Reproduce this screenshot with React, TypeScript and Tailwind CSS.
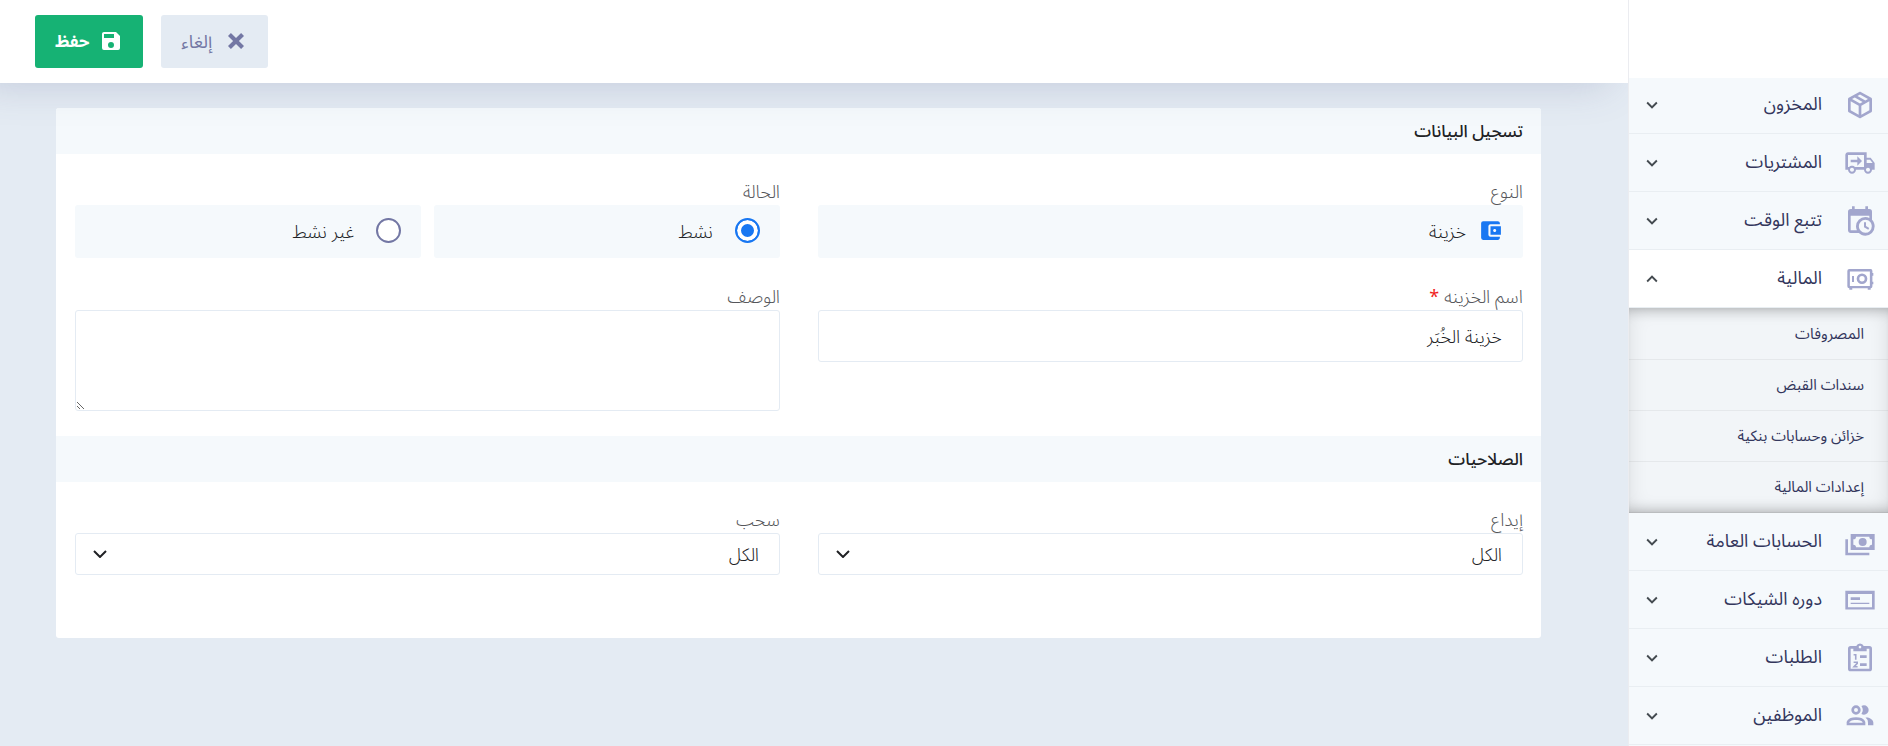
import { ReactNode, useState } from "react";
import { MdAccountBalanceWallet } from "react-icons/md";

function Icon({ className, children }: { className?: string; children: ReactNode }) {
  return (
    <svg viewBox="0 0 24 24" fill="currentColor" aria-hidden="true" className={className}>
      {children}
    </svg>
  );
}

const icons = {
  stock: (
    <path d="M21,16.5C21,16.88 20.79,17.21 20.47,17.38L12.57,21.82C12.41,21.94 12.21,22 12,22C11.79,22 11.59,21.94 11.43,21.82L3.53,17.38C3.21,17.21 3,16.88 3,16.5V7.5C3,7.12 3.21,6.79 3.53,6.62L11.43,2.18C11.59,2.06 11.79,2 12,2C12.21,2 12.41,2.06 12.57,2.18L20.47,6.62C20.79,6.79 21,7.12 21,7.5V16.5M12,4.15L10.11,5.22L16,8.61L17.96,7.5L12,4.15M6.04,7.5L12,10.85L13.96,9.75L8.08,6.35L6.04,7.5M5,15.91L11,19.29V12.58L5,9.21V15.91M19,15.91V9.21L13,12.58V19.29L19,15.91Z" />
  ),
  truck: (
    <path d="M18 18.5C18.83 18.5 19.5 17.83 19.5 17C19.5 16.17 18.83 15.5 18 15.5C17.17 15.5 16.5 16.17 16.5 17C16.5 17.83 17.17 18.5 18 18.5M19.5 9.5H17V12H21.46L19.5 9.5M6 18.5C6.83 18.5 7.5 17.83 7.5 17C7.5 16.17 6.83 15.5 6 15.5C5.17 15.5 4.5 16.17 4.5 17C4.5 17.83 5.17 18.5 6 18.5M20 8L23 12V17H21C21 18.66 19.66 20 18 20C16.34 20 15 18.66 15 17H9C9 18.66 7.66 20 6 20C4.34 20 3 18.66 3 17H1V6C1 4.89 1.89 4 3 4H17V8H20M3 6V15H3.76C4.31 14.39 5.11 14 6 14C6.89 14 7.69 14.39 8.24 15H15V6H3M10 7L13.5 10.5L10 14V11.5H5V9.5H10V7Z" />
  ),
  time: (
    <path d="M15,13H16.5V15.82L18.94,17.23L18.19,18.53L15,16.69V13M19,8H5V19H9.67C9.24,18.09 9,17.07 9,16A7,7 0 0,1 16,9C17.07,9 18.09,9.24 19,9.67V8M5,21C3.89,21 3,20.1 3,19V5C3,3.89 3.89,3 5,3H6V1H8V3H16V1H18V3H19A2,2 0 0,1 21,5V11.1C22.24,12.36 23,14.09 23,16A7,7 0 0,1 16,23C14.09,23 12.36,22.24 11.1,21H5M16,11.15A4.85,4.85 0 0,0 11.15,16C11.15,18.68 13.32,20.85 16,20.85A4.85,4.85 0 0,0 20.85,16C20.85,13.32 18.68,11.15 16,11.15Z" />
  ),
  safe: (
    <path
      fillRule="evenodd"
      d="M4 4.5H20A1.5 1.5 0 0 1 21.3 6V7.5H22V9.5H21.3V14H22V16H21.3V17.5A1.5 1.5 0 0 1 20 19V20H17.8V19H6.2V20H4V19A1.5 1.5 0 0 1 2.5 17.5V6A1.5 1.5 0 0 1 4 4.5M4.4 6.3V17.2H19.4V6.3H4.4M6 9.7H7.5V14.2H6V9.7M13.5 7.8A4 4 0 1 1 13.5 15.8A4 4 0 1 1 13.5 7.8M13.5 9.8A2 2 0 1 0 13.5 13.8A2 2 0 1 0 13.5 9.8"
    />
  ),
  cash: (
    <path d="M5,6H23V18H5V6M14,9A3,3 0 0,1 17,12A3,3 0 0,1 14,15A3,3 0 0,1 11,12A3,3 0 0,1 14,9M9,8A2,2 0 0,1 7,10V14A2,2 0 0,1 9,16H19A2,2 0 0,1 21,14V10A2,2 0 0,1 19,8H9M1,10H3V20H19V22H1V10Z" />
  ),
  cheque: (
    <path fillRule="evenodd" d="M1 5H23V19.2H1V5M3 7.5V17.4H21V7.5H3M5 10H12V12H5V10M5 14H19V15H5V14" />
  ),
  orders: (
    <>
      <path
        fillRule="evenodd"
        d="M5 3H9.2A3 3 0 0 1 14.8 3H19A2 2 0 0 1 21 5V20A2 2 0 0 1 19 22H5A2 2 0 0 1 3 20V5A2 2 0 0 1 5 3M12 2.8A1 1 0 0 0 12 4.8A1 1 0 0 0 12 2.8M5 5V20H19V5H17V7H7V5H5M12 10H17V12H12V10M12 16H17V18H12V16"
      />
      <path d="M7.2 9.6H8.8V13.4M7.2 15.2H9.9V16L7.5 18.6H10.2" fill="none" stroke="currentColor" strokeWidth="1.2" />
    </>
  ),
  staff: (
    <path d="M13.07 10.41A5 5 0 0 0 13.07 4.59A3.39 3.39 0 0 1 15 4A3.5 3.5 0 0 1 15 11A3.39 3.39 0 0 1 13.07 10.41M5.5 7.5A3.5 3.5 0 1 1 9 11A3.5 3.5 0 0 1 5.5 7.5M7.5 7.5A1.5 1.5 0 1 0 9 6A1.5 1.5 0 0 0 7.5 7.5M16 17V19H2V17S2 13 9 13 16 17 16 17M14 17C13.86 16.22 12.67 15 9 15S4.07 16.31 4 17M15.95 13A5.32 5.32 0 0 1 18 17V19H22V17S22 13.37 15.94 13Z" />
  ),
  down: <path d="M7.41,8.58L12,13.17L16.59,8.58L18,10L12,16L6,10L7.41,8.58Z" />,
  close: (
    <path d="M20 6.91L17.09 4L12 9.09L6.91 4L4 6.91L9.09 12L4 17.09L6.91 20L12 14.91L17.09 20L20 17.09L14.91 12L20 6.91Z" />
  ),
  save: (
    <path d="M15,9H5V5H15M12,19A3,3 0 0,1 9,16A3,3 0 0,1 12,13A3,3 0 0,1 15,16A3,3 0 0,1 12,19M17,3H5C3.89,3 3,3.9 3,5V19A2,2 0 0,0 5,21H19A2,2 0 0,0 21,19V7L17,3Z" />
  ),
};

type MenuItem = { label: string; icon: ReactNode; children?: string[] };

const menu: MenuItem[] = [
  { label: "المخزون", icon: icons.stock },
  { label: "المشتريات", icon: icons.truck },
  { label: "تتبع الوقت", icon: icons.time },
  {
    label: "المالية",
    icon: icons.safe,
    children: ["المصروفات", "سندات القبض", "خزائن وحسابات بنكية", "إعدادات المالية"],
  },
  { label: "الحسابات العامة", icon: icons.cash },
  { label: "دوره الشيكات", icon: icons.cheque },
  { label: "الطلبات", icon: icons.orders },
  { label: "الموظفين", icon: icons.staff },
];

function Sidebar() {
  return (
    <aside className="relative z-20 w-[260px] shrink-0 border-e border-[#ebecf0] bg-[#f5f9fc]">
      <div className="relative z-10 h-[78px] bg-white" />
      <nav className="-mt-0.5">
        {menu.map((item) => (
          <div key={item.label}>
            <button
              type="button"
              aria-expanded={!!item.children}
              className={`flex h-[58px] w-full items-center border-b border-[#e9eef2] px-3 text-[18px] text-[#33365c] ${
                item.children ? "bg-white" : ""
              }`}
            >
              <Icon className="size-8 shrink-0 text-[#a2a6cd]">{item.icon}</Icon>
              <span className="ms-[22px] grow text-start">{item.label}</span>
              <Icon className={`size-[22px] shrink-0 text-[#444b50] ${item.children ? "rotate-180" : ""}`}>
                {icons.down}
              </Icon>
            </button>
            {item.children ? (
              <div className="bg-[#f2f5f8] pt-px shadow-[inset_0_12px_14px_-12px_rgba(0,0,0,0.3),inset_0_-12px_14px_-12px_rgba(0,0,0,0.3),inset_0_0_20px_rgba(0,0,0,0.1)]">
                {item.children.map((child) => (
                  <a
                    key={child}
                    href="#"
                    className="flex h-[51px] items-center border-b border-black/5 px-6 text-[15px] text-[#33365c]"
                  >
                    {child}
                  </a>
                ))}
              </div>
            ) : null}
          </div>
        ))}
      </nav>
    </aside>
  );
}

function SectionTitle({ children }: { children: ReactNode }) {
  return (
    <h2 className="flex h-[46px] items-center bg-[#f5f9fc] px-[18px] pt-[3px] text-[17px] font-medium text-[#202124]">
      {children}
    </h2>
  );
}

const labelClass = "block h-7 text-[18px] leading-[30px] font-[350] text-[#55565a]";
const valueClass = "text-[18px] font-[350] text-[#202124]";
const panelClass = `flex h-[53px] items-center rounded-[3px] bg-[#f5f9fc] px-5 pt-0.5 ${valueClass}`;
const boxClass = `w-full rounded-[3px] border border-[#e4ebf3] bg-white px-5 ${valueClass}`;

function RadioBox({ label, checked, onChange }: { label: string; checked: boolean; onChange: () => void }) {
  return (
    <label className={`${panelClass} flex-1 gap-[22px]`}>
      <input
        type="radio"
        name="status"
        checked={checked}
        onChange={onChange}
        className="mb-1 size-[25px] shrink-0 appearance-none rounded-full border-2 border-[#7377a4] bg-white checked:border-[#1877f2] checked:bg-[#1877f2] checked:shadow-[inset_0_0_0_4px_white]"
      />
      {label}
    </label>
  );
}

function SelectField({ id, label }: { id: string; label: string }) {
  return (
    <div>
      <label htmlFor={id} className={labelClass}>
        {label}
      </label>
      <div className="relative">
        <select id={id} className={`${boxClass} h-[42px] appearance-none pt-0.5`}>
          <option>الكل</option>
        </select>
        <svg
          viewBox="0 0 14 8"
          fill="none"
          stroke="#202124"
          strokeWidth="2"
          aria-hidden="true"
          className="pointer-events-none absolute end-[18px] top-[17px] h-2 w-3.5"
        >
          <path d="M1 1l6 6 6-6" />
        </svg>
      </div>
    </div>
  );
}

export default function App() {
  const [active, setActive] = useState(true);
  const [name, setName] = useState("خزينة الخُبَر");

  return (
    <div
      dir="rtl"
      lang="ar"
      className="flex min-h-screen bg-[#e4ebf3] font-['Noto_Sans_Arabic','Noto_Sans',sans-serif]"
    >
      <Sidebar />
      <div className="min-w-0 flex-1">
        <header className="relative z-10 flex h-[83px] items-center justify-end gap-[18px] bg-white px-[35px] shadow-[-20px_0_40px_rgba(82,90,140,0.25)]">
          <button
            type="button"
            className="flex h-[53px] items-center gap-3 rounded-[3px] bg-[#e4ebf3] px-5 pt-0.5 text-[18px] text-[#7377a4]"
          >
            <Icon className="mb-1 size-6">{icons.close}</Icon>
            إلغاء
          </button>
          <button
            type="button"
            className="flex h-[53px] items-center gap-2.5 rounded-[3px] bg-[#16b274] px-5 pt-0.5 text-[17px] font-bold text-white"
          >
            <Icon className="mb-1 size-6">{icons.save}</Icon>
            حفظ
          </button>
        </header>

        <main className="ps-[87px] pe-14 pt-[25px]">
          <form className="overflow-hidden rounded-[3px] bg-white">
            <SectionTitle>تسجيل البيانات</SectionTitle>
            <div className="grid grid-cols-2 gap-x-[38px] gap-y-6 ps-[18px] pe-[19px] pt-[23px] pb-[25px]">
              <div>
                <span className={labelClass}>النوع</span>
                <div className={`${panelClass} gap-3`}>
                  <MdAccountBalanceWallet className="mb-1 size-[25px] text-[#1877f2]" />
                  خزينة
                </div>
              </div>
              <fieldset>
                <legend className={labelClass}>الحالة</legend>
                <div className="flex gap-[13px]">
                  <RadioBox label="نشط" checked={active} onChange={() => setActive(true)} />
                  <RadioBox label="غير نشط" checked={!active} onChange={() => setActive(false)} />
                </div>
              </fieldset>
              <div>
                <label htmlFor="name" className={labelClass}>
                  اسم الخزينه <span className="font-normal text-[#f01e1e]">*</span>
                </label>
                <input
                  id="name"
                  type="text"
                  value={name}
                  onChange={(e) => setName(e.target.value)}
                  className={`${boxClass} h-[52px] pt-0.5`}
                />
              </div>
              <div>
                <label htmlFor="description" className={labelClass}>
                  الوصف
                </label>
                <textarea id="description" className={`${boxClass} block h-[101px] resize py-3`} />
              </div>
            </div>

            <SectionTitle>الصلاحيات</SectionTitle>
            <div className="grid grid-cols-2 gap-x-[38px] ps-[18px] pe-[19px] pt-[23px] pb-[63px]">
              <SelectField id="deposit" label="إيداع" />
              <SelectField id="withdraw" label="سحب" />
            </div>
          </form>
        </main>
      </div>
    </div>
  );
}
